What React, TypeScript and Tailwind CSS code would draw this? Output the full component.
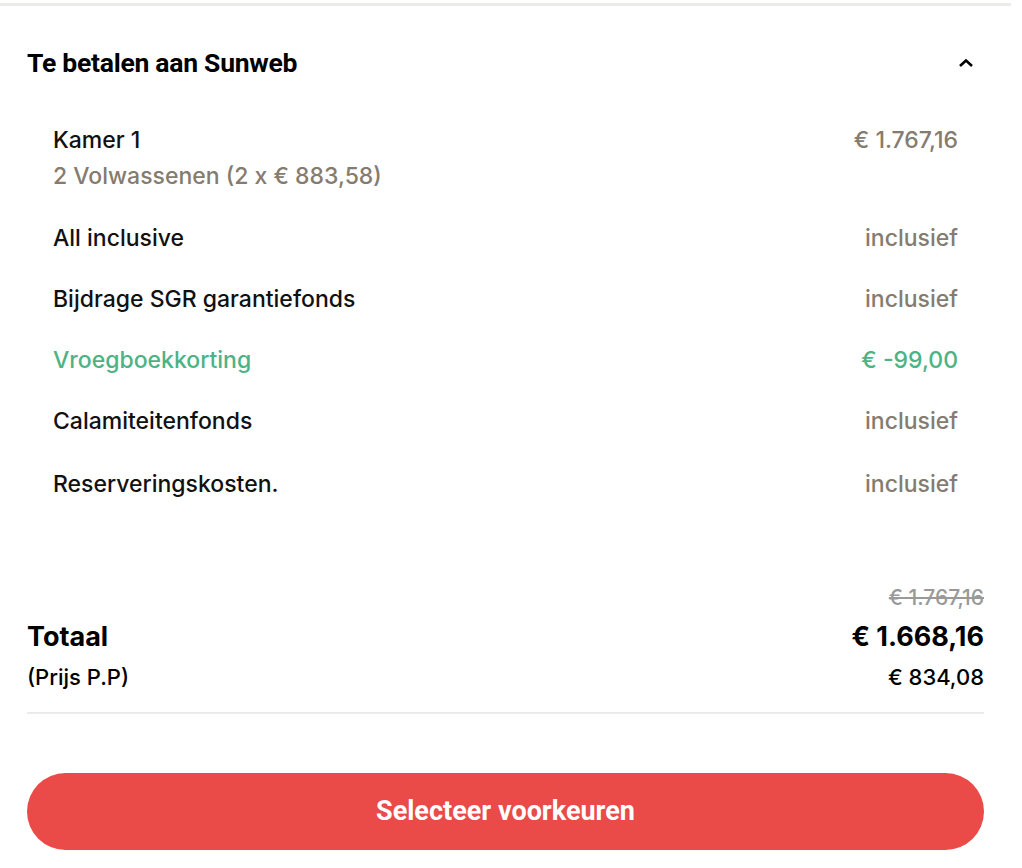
import React from "react";

const rows: { label: string; value: string; green?: boolean }[] = [
  { label: "All inclusive", value: "inclusief" },
  { label: "Bijdrage SGR garantiefonds", value: "inclusief" },
  { label: "Vroegboekkorting", value: "€ -99,00", green: true },
  { label: "Calamiteitenfonds", value: "inclusief" },
  { label: "Reserveringskosten.", value: "inclusief" },
];

export default function App() {
  return (
    <div className="w-[1022px] h-[868px] bg-white overflow-hidden" style={{ fontFamily: "Inter, 'Noto Sans', sans-serif" }}>
      <div className="w-[1011px]">
        <div className="h-[3px] mt-[3px] bg-[#ebebe9]" />
        <div className="px-[27px]">
          <div className="flex items-center justify-between h-[112px] pt-[2px]">
            <h2 className="text-[26.5px] font-bold tracking-[-0.01em] text-black" style={{ fontFamily: "Roboto, sans-serif" }}>
              Te betalen aan Sunweb
            </h2>
            <svg width="18" height="12" viewBox="0 0 18 12" className="mr-[9px]">
              <path d="M3 9 L9 3.5 L15 9" fill="none" stroke="#000" strokeWidth="2.6" />
            </svg>
          </div>
          <div className="px-[26px] pt-[4px]">
            <div className="flex justify-between text-[23px] font-medium leading-[36px]">
              <div>
                <div className="text-[#111]">Kamer 1</div>
                <div className="text-[#857b6f]">2 Volwassenen (2 x € 883,58)</div>
              </div>
              <div className="text-[#857b6f]">€ 1.767,16</div>
            </div>
            <div className="mt-[26px] flex flex-col gap-[25px]">
              {rows.map((r, i) => (
                <div key={r.label} className={"flex justify-between text-[23px] font-medium leading-[36px]" + (i === rows.length - 1 ? " mt-[2px]" : "")}>
                  <span className={r.green ? "text-[#4db384]" : "text-[#111]"}>{r.label}</span>
                  <span className={r.green ? "text-[#4db384]" : "text-[#857b6f]"}>{r.value}</span>
                </div>
              ))}
            </div>
          </div>
          <div className="mt-[82px] flex flex-col">
            <div className="text-right text-[21px] font-medium leading-[28px] text-[#999] line-through">€ 1.767,16</div>
            <div className="flex justify-between items-center text-[27px] font-bold leading-[36px] mt-[7px] text-black">
              <span>Totaal</span>
              <span>€ 1.668,16</span>
            </div>
            <div className="flex justify-between text-[22px] font-medium leading-[30px] mt-[7px] text-black">
              <span>(Prijs P.P)</span>
              <span>€ 834,08</span>
            </div>
          </div>
          <div className="h-[2px] bg-[#ebebe9] mt-[20px]" />
          <button className="mt-[59px] w-full h-[77px] rounded-full bg-[#ea4a48] text-white text-[27px] font-bold tracking-[0em]" style={{ fontFamily: "Roboto, sans-serif" }}>
            Selecteer voorkeuren
          </button>
        </div>
      </div>
    </div>
  );
}
